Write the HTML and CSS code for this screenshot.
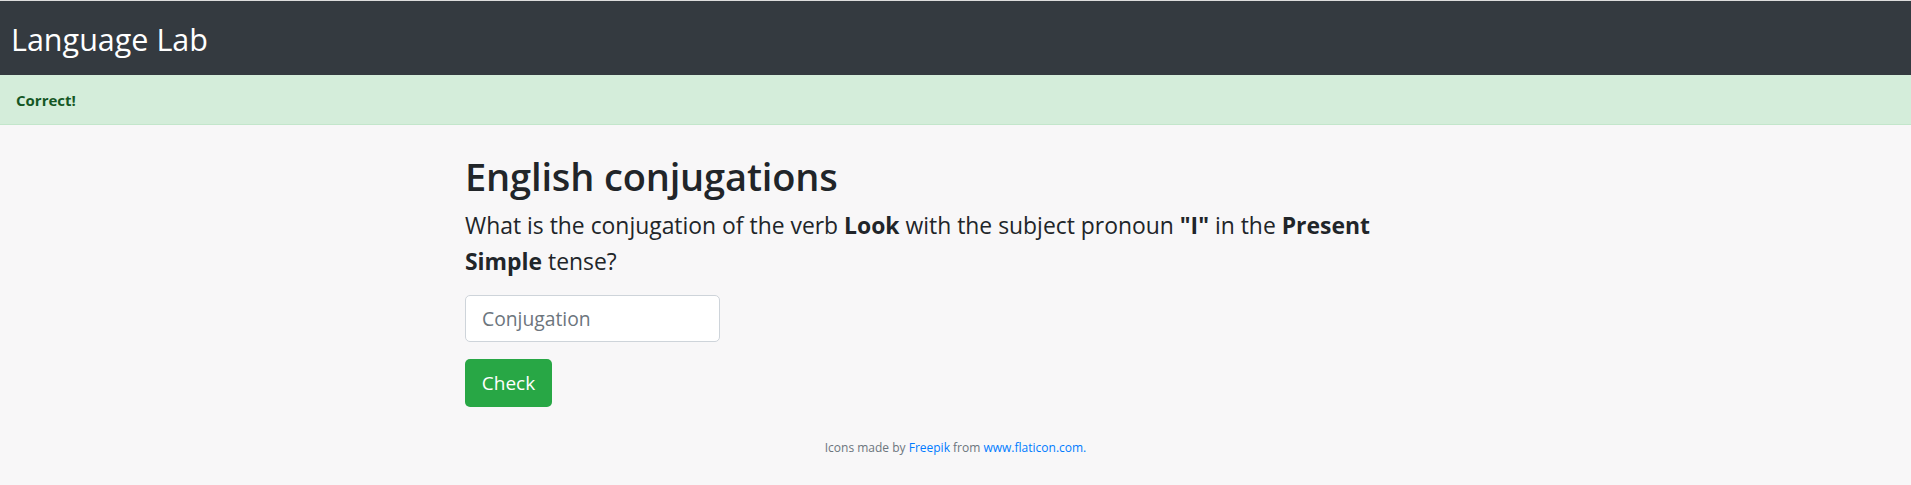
FILE: index.html
```html
<!DOCTYPE html>
<html lang="en">
<head>
<meta charset="utf-8">
<title>Language Lab</title>
<link rel="stylesheet" href="styles.css">
</head>
<body>
<nav class="navbar">
  <span class="brand">Language Lab</span>
</nav>
<div class="alert">Correct!</div>
<main class="content">
  <h1 class="title">English conjugations</h1>
  <p class="question">What is the conjugation of the verb <b>Look</b> with the subject pronoun <b>"I"</b> in the <b>Present</b> <b>Simple</b> tense?</p>
  <form class="quiz">
    <input class="answer" type="text" placeholder="Conjugation">
    <button class="check" type="button">Check</button>
  </form>
</main>
<footer class="credits">Icons made by <a href="#">Freepik</a> from <a href="#">www.flaticon.com.</a></footer>
</body>
</html>
```

FILE: styles.css
```css
html, body {
  margin: 0;
  padding: 0;
}
body {
  background: #f8f7f8;
  font-family: "Open Sans", "Noto Sans", sans-serif;
  color: #212529;
  height: 485px;
}
.navbar {
  border-top: 1px solid #dcdcdc;
  background: #343a40;
  height: 74px;
  display: flex;
  align-items: center;
  padding-left: 11px;
}
.brand {
  color: #ffffff;
  font-size: 30.5px;
  line-height: 40px;
  margin-top: 2px;
}
.alert {
  background: #d4edda;
  border-bottom: 1px solid #c3e6cb;
  color: #155724;
  height: 49px;
  display: flex;
  align-items: center;
  padding-left: 16px;
  font-size: 15px;
  font-weight: 700;
}
.content {
  width: 981px;
  margin: 0 auto;
  display: flex;
  flex-direction: column;
  align-items: flex-start;
}
.title {
  margin: 25px 0 0 0;
  font-size: 38px;
  line-height: normal;
  font-weight: 600;
  letter-spacing: -0.15px;
}
.question {
  margin: 6px 0 0 0;
  font-size: 22.9px;
  line-height: 36px;
  max-width: 930px;
}
.quiz {
  display: flex;
  flex-direction: column;
  align-items: flex-start;
  gap: 17px;
  margin-top: 15px;
}
.answer {
  box-sizing: border-box;
  width: 255px;
  height: 47px;
  border: 1px solid #ced4da;
  border-radius: 5px;
  background: #ffffff;
  padding: 0 16px;
  font-family: inherit;
  font-size: 19.3px;
  color: #495057;
}
.answer::placeholder {
  color: #6c757d;
}
.check {
  box-sizing: border-box;
  width: 87px;
  height: 48px;
  border: none;
  border-radius: 5px;
  background: #28a745;
  color: #ffffff;
  font-family: inherit;
  font-size: 19px;
  padding: 0;
}
.credits {
  text-align: center;
  font-size: 12px;
  color: #6c757d;
  margin-top: 32px;
}
.credits a {
  color: #007bff;
  text-decoration: none;
}
```
